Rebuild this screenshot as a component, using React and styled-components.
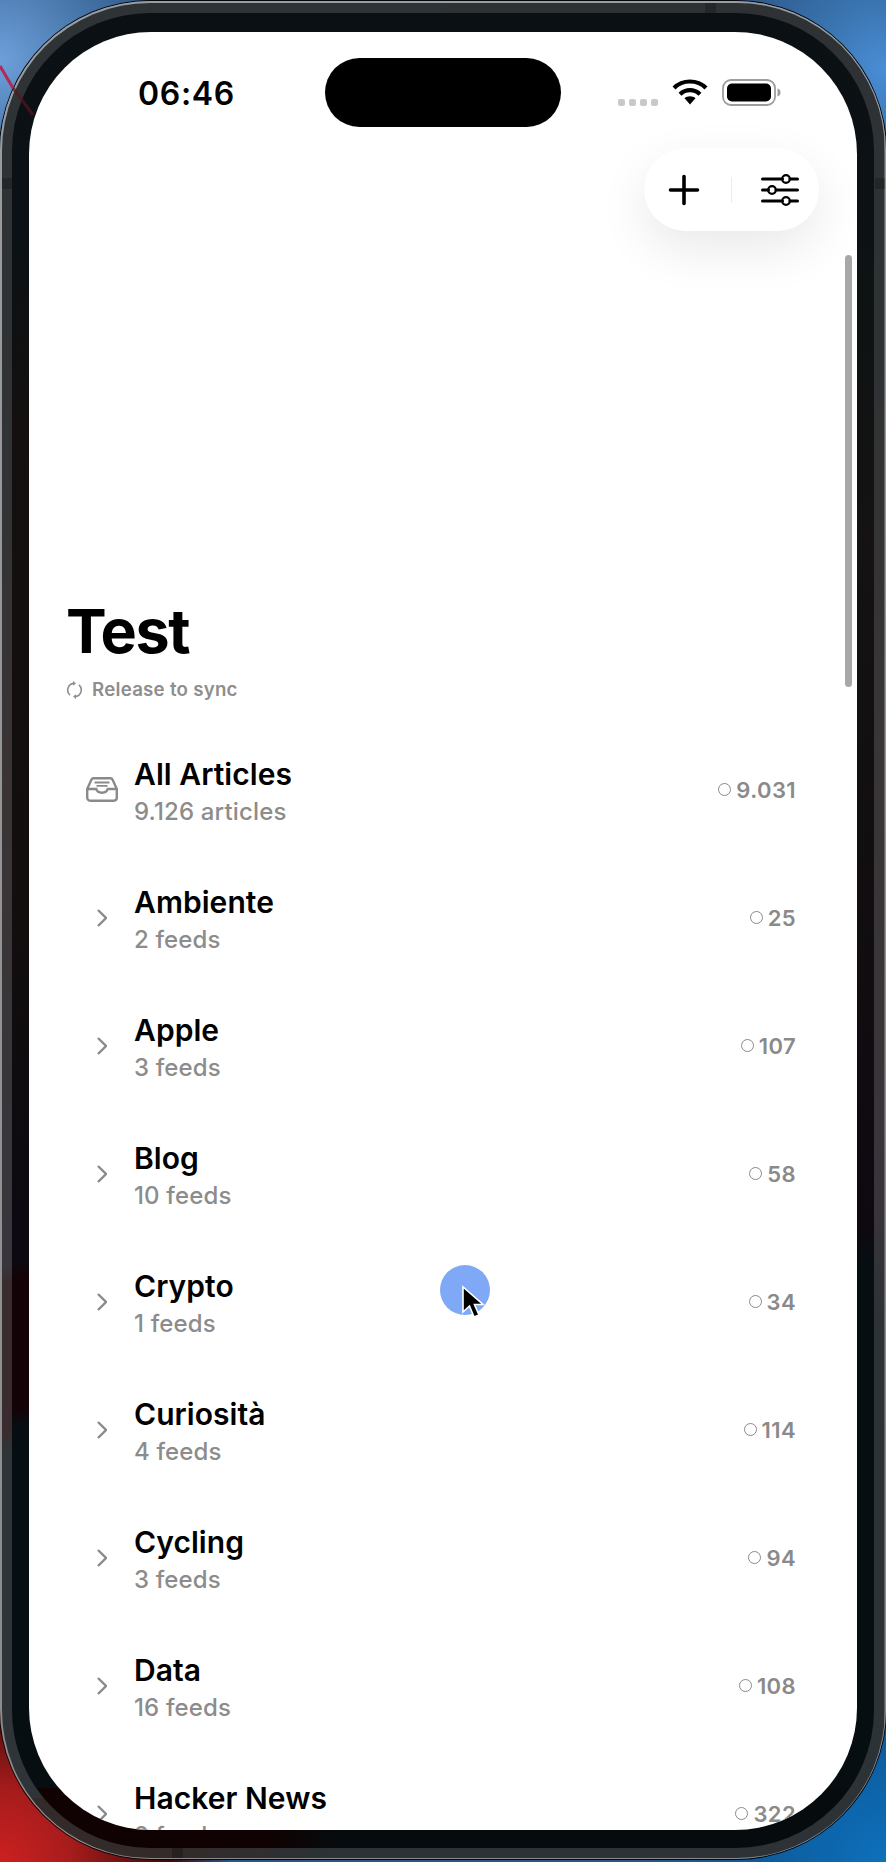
import React from 'react';
import styled, { createGlobalStyle } from 'styled-components';

const Global = createGlobalStyle`
  html, body { margin: 0; padding: 0; background: #000; }
  * { box-sizing: border-box; }
  body { font-family: Inter, "Liberation Sans", sans-serif; -webkit-font-smoothing: antialiased; }
`;

const Desktop = styled.div`
  position: relative;
  width: 886px;
  height: 1862px;
  overflow: hidden;
  background:
    radial-gradient(circle at 0 1862px, #cc2020 0, #a81c1c 70px, #3c0a0a 170px, rgba(60,10,10,0) 230px),
    radial-gradient(circle at 886px 1862px, #0e70bc 0, #0d5c9c 120px, rgba(13,60,100,0) 240px),
    radial-gradient(circle at 0 60px, #6f9fda 0, #4f7fb4 70px, rgba(47,84,130,0) 170px),
    radial-gradient(circle at 886px 70px, #4a8ed6 0, #3a74b0 70px, rgba(44,84,130,0) 170px),
    #2c5484;
`;

const Streak = styled.svg`
  position: absolute;
  left: 0;
  top: 0;
  width: 60px;
  height: 140px;
`;

const Rim = styled.div`
  height: 1858px;
  margin: 1px 0 0;
  padding: 1.5px;
  border-radius: 150px;
  background: linear-gradient(180deg, #9a9d9f, #8c8a8a);
  box-shadow: 0 0 0 1px #05080c;
`;

const Band = styled.div`
  position: relative;
  height: 100%;
  padding: 10px 10.5px 10px 10.5px;
  border-radius: 148px;
  background:
    linear-gradient(90deg, #332a2a 0, #332a2a 180px, #2c3236 330px) bottom / 100% 60px no-repeat,
    linear-gradient(180deg, #2e3336 0, #2f3234 18%, #3a3434 42%, #38363c 65%, #38363c 68%, #3a2c2e 69%, #3a2c2e 77%, #2e3438 78%, #2e3438 100%) left / 50% 100% no-repeat,
    linear-gradient(180deg, #2e3234 0, #2e3234 18%, #3a3636 40%, #38343a 65%, #2c3236 72%, #2c3236 100%) right / 50% 100% no-repeat;
`;

const Bezel = styled.div`
  height: 100%;
  padding: 19px 17px 18px 17px;
  border-radius: 138px;
  background:
    linear-gradient(90deg, #100202 0, #100202 260px, #060c0e 330px) bottom / 100% 60px no-repeat,
    linear-gradient(180deg, #0a1013 0, #0b1114 12%, #141010 22%, #120e0e 50%, #0c0a10 65%, #0c0a10 68%, #140306 69%, #140306 76%, #060e12 77%, #060e12 100%) left / 50% 100% no-repeat,
    linear-gradient(180deg, #0a1013 0, #0c1214 12%, #141212 28%, #100c10 55%, #0e0810 66%, #060e12 68%, #060e12 100%) right / 50% 100% no-repeat;
`;

const Screen = styled.div`
  height: 100%;
  border-radius: 122px;
  overflow: hidden;
  background: #fff;
  position: relative;
`;

const AntennaBand = styled.span`
  position: absolute;
  background: rgba(0, 0, 0, 0.22);
  ${p => p.$side === 'left' && `left: 0; top: 175px; width: 10px; height: 11px;`}
  ${p => p.$side === 'right' && `right: 0; top: 175px; width: 10px; height: 11px;`}
  ${p => p.$side === 'top' && `top: 0; right: 169px; width: 11px; height: 10px;`}
  ${p => p.$side === 'bottom' && `bottom: 0; left: 170px; width: 11px; height: 10px;`}
`;

const StatusBar = styled.div`
  height: 109px;
  display: flex;
  align-items: flex-start;
  justify-content: space-between;
  padding: 44px 75px 0 109px;
`;

const Clock = styled.span`
  font-size: 32px;
  line-height: 36px;
  font-weight: 600;
  letter-spacing: 0.65px;
  color: #000;
`;

const StatusIcons = styled.div`
  display: flex;
  align-items: flex-start;
  margin-top: 2px;
`;

const CellDots = styled.div`
  display: flex;
  gap: 4px;
  margin: 21px 14px 0 0;
`;

const CellDot = styled.i`
  width: 7px;
  height: 7px;
  border-radius: 2px;
  background: #c9c9c9;
`;

const Island = styled.div`
  position: absolute;
  left: 296px;
  top: 26px;
  width: 236px;
  height: 69px;
  border-radius: 35px;
  background: #000;
`;

const FloatBar = styled.div`
  position: absolute;
  top: 116px;
  right: 38px;
  width: 175px;
  height: 83px;
  border-radius: 42px;
  background: #fff;
  display: flex;
  align-items: center;
  justify-content: space-between;
  padding: 1px 20px 0 24px;
  box-shadow: 0 18px 50px rgba(0, 0, 0, 0.09);
`;

const BarDivider = styled.span`
  width: 1px;
  height: 26px;
  background: #ececec;
  margin-left: 1px;
`;

const ScrollThumb = styled.div`
  position: absolute;
  right: 5px;
  top: 223px;
  width: 7px;
  height: 432px;
  border-radius: 3.5px;
  background: #a8a8a8;
`;

const Cursor = styled.div`
  position: absolute;
  left: 411px;
  top: 1233px;
  width: 50px;
  height: 50px;
  border-radius: 50%;
  background: #7fa8f6;
`;

const CursorArrow = styled.svg`
  position: absolute;
  left: 20px;
  top: 20px;
  width: 26px;
  height: 36px;
`;

const Heading = styled.header`
  padding: 453px 0 0 37px;
`;

const Title = styled.h1`
  margin: 0;
  font-size: 61px;
  line-height: 75px;
  font-weight: 700;
  letter-spacing: -1.4px;
  color: #000;
`;

const SyncRow = styled.div`
  display: flex;
  align-items: center;
  gap: 9px;
  margin-top: 10px;
  font-size: 18.7px;
  line-height: 22px;
  font-weight: 600;
  color: #8e8e8e;
  letter-spacing: 0.25px;
`;

const List = styled.ul`
  list-style: none;
  margin: 25px 0 0;
  padding: 0 61px 0 0;
`;

const Row = styled.li`
  display: flex;
  align-items: center;
  height: 128px;
`;

const Lead = styled.span`
  width: 105px;
  display: flex;
  justify-content: flex-end;
  padding-right: ${p => (p.$inbox ? '16px' : '27px')};
  color: #8a8a8a;
`;

const RowText = styled.div`
  flex: 1;
  display: flex;
  flex-direction: column;
  padding-top: 7px;
`;

const RowTitle = styled.span`
  font-size: 30px;
  line-height: 37px;
  font-weight: 600;
  letter-spacing: 0.05px;
  color: #000;
`;

const RowSub = styled.span`
  font-size: 24px;
  line-height: 37px;
  font-weight: 500;
  color: #8c8c8c;
  letter-spacing: 0.15px;
`;

const Count = styled.span`
  display: flex;
  align-items: center;
  gap: 5px;
  font-size: 22px;
  font-weight: 600;
  color: #8a8a8a;
  letter-spacing: 0.4px;
`;

const Ring = styled.i`
  width: 13px;
  height: 13px;
  border-radius: 50%;
  border: 1.6px solid #8a8a8a;
`;

const Wifi = () => (
  <svg width="36" height="27" viewBox="0 0 36 27" fill="none" style={{ display: 'block', marginTop: 1 }}>
    <path d="M2 9C6 5 11.700 2.500 18 2.500S30 5 34 9" stroke="#000" strokeWidth="4.200" />
    <path d="M8 15.200c2.700-2.500 6.200-4 10-4s7.300 1.500 10 4" stroke="#000" strokeWidth="4.200" />
    <path d="M12.500 19.200c1.500-1.200 3.400-1.900 5.500-1.900s4 .7 5.500 1.900L18 25.500z" fill="#000" />
  </svg>
);

const Battery = () => (
  <svg width="60" height="28" viewBox="0 0 60 28" fill="none" style={{ display: 'block', marginLeft: 14, marginTop: 1 }}>
    <rect x="1" y="1" width="52" height="25" rx="8" stroke="#9d9d9d" strokeWidth="1.8" />
    <rect x="5" y="4.500" width="44" height="18" rx="5" fill="#000" />
    <path d="M55.500 9.500c2 .5 3 2 3 4s-1 3.500-3 4z" fill="#9d9d9d" />
  </svg>
);

const Plus = () => (
  <svg width="32" height="32" viewBox="0 0 32 32" fill="none" style={{ display: 'block' }}>
    <path d="M16 2.500v27M2.500 16h27" stroke="#000" strokeWidth="3.600" strokeLinecap="round" />
  </svg>
);

const Sliders = () => (
  <svg width="38" height="32" viewBox="0 0 38 32" fill="none" style={{ display: 'block' }}>
    <path d="M1.500 5h20M29 5h7.500M1.500 16h6M15 16h21.500M1.500 27h20M29 27h7.500" stroke="#000" strokeWidth="3" strokeLinecap="round" />
    <circle cx="25" cy="5" r="3.800" stroke="#000" strokeWidth="2.200" />
    <circle cx="11" cy="16" r="3.800" stroke="#000" strokeWidth="2.200" />
    <circle cx="25" cy="27" r="3.800" stroke="#000" strokeWidth="2.200" />
  </svg>
);

const SyncIcon = () => (
  <svg width="17" height="18" viewBox="0 0 17 18" fill="none" style={{ display: 'block' }}>
    <path d="M7.500 2.400A6.800 6.800 0 0 0 4 14.200" stroke="#8e8e8e" strokeWidth="1.600" />
    <path d="M9.500 15.600A6.800 6.800 0 0 0 13 3.800" stroke="#8e8e8e" strokeWidth="1.600" />
    <path d="M7 0v4.800L10 2.400zM10 13.200V18L7 15.600z" fill="#8e8e8e" />
  </svg>
);

const Inbox = () => (
  <svg width="32" height="25" viewBox="0 0 32 25" fill="none" style={{ display: 'block' }}>
    <path d="M1.200 12 5.500 2.600c.4-.8 1-1.300 2-1.300h17c1 0 1.600.5 2 1.300L30.800 12v8.500c0 1.800-1.200 3.200-3 3.200H4.200c-1.800 0-3-1.400-3-3.200z" stroke="#8a8a8a" strokeWidth="2.400" strokeLinejoin="round" />
    <path d="M1.500 12h8.800c.5 2.200 2.700 3.700 5.700 3.700s5.200-1.500 5.700-3.700h8.800" stroke="#8a8a8a" strokeWidth="2.400" />
    <path d="M8.500 5.500h15M10.500 8.800h11" stroke="#8a8a8a" strokeWidth="1.800" />
  </svg>
);

const Chevron = () => (
  <svg width="10" height="18" viewBox="0 0 10 18" fill="none" style={{ display: 'block' }}>
    <path d="M1 1l8 8-8 8" stroke="#8a8a8a" strokeWidth="2.400" />
  </svg>
);

const rows = [
  ['Ambiente', '2 feeds', '25'],
  ['Apple', '3 feeds', '107'],
  ['Blog', '10 feeds', '58'],
  ['Crypto', '1 feeds', '34'],
  ['Curiosità', '4 feeds', '114'],
  ['Cycling', '3 feeds', '94'],
  ['Data', '16 feeds', '108'],
  ['Hacker News', '2 feeds', '322'],
];

const FeedRow = ({ icon, inbox, title, sub, count }) => (
  <Row>
    <Lead $inbox={inbox}>{icon}</Lead>
    <RowText>
      <RowTitle>{title}</RowTitle>
      <RowSub>{sub}</RowSub>
    </RowText>
    <Count>
      <Ring />
      {count}
    </Count>
  </Row>
);

export default function App() {
  return (
    <Desktop>
      <Global />
      <Rim>
        <Band>
          <AntennaBand $side="left" />
          <AntennaBand $side="right" />
          <AntennaBand $side="top" />
          <AntennaBand $side="bottom" />
          <Bezel>
            <Screen>
              <StatusBar>
                <Clock>06:46</Clock>
                <StatusIcons>
                  <CellDots>
                    <CellDot />
                    <CellDot />
                    <CellDot />
                    <CellDot />
                  </CellDots>
                  <Wifi />
                  <Battery />
                </StatusIcons>
              </StatusBar>
              <Heading>
                <Title>Test</Title>
                <SyncRow>
                  <SyncIcon />
                  Release to sync
                </SyncRow>
              </Heading>
              <List>
                <FeedRow icon={<Inbox />} inbox title="All Articles" sub="9.126 articles" count="9.031" />
                {rows.map(([title, sub, count]) => (
                  <FeedRow key={title} icon={<Chevron />} title={title} sub={sub} count={count} />
                ))}
              </List>
              <Island />
              <FloatBar>
                <Plus />
                <BarDivider />
                <Sliders />
              </FloatBar>
              <ScrollThumb />
              <Cursor>
                <CursorArrow viewBox="0 0 26 36">
                  <path d="M3 2v25l6.500-6 4.500 11 5-2-4.500-10.500H23z" fill="#000" stroke="#fff" strokeWidth="1.600" />
                </CursorArrow>
              </Cursor>
            </Screen>
          </Bezel>
        </Band>
      </Rim>
      <Streak viewBox="0 0 60 140">
        <path d="M0 66 13 88" stroke="#b02a55" strokeWidth="3" />
        <path d="M13 88 33 115" stroke="#5a1420" strokeWidth="3" opacity="0.7" />
      </Streak>
    </Desktop>
  );
}
